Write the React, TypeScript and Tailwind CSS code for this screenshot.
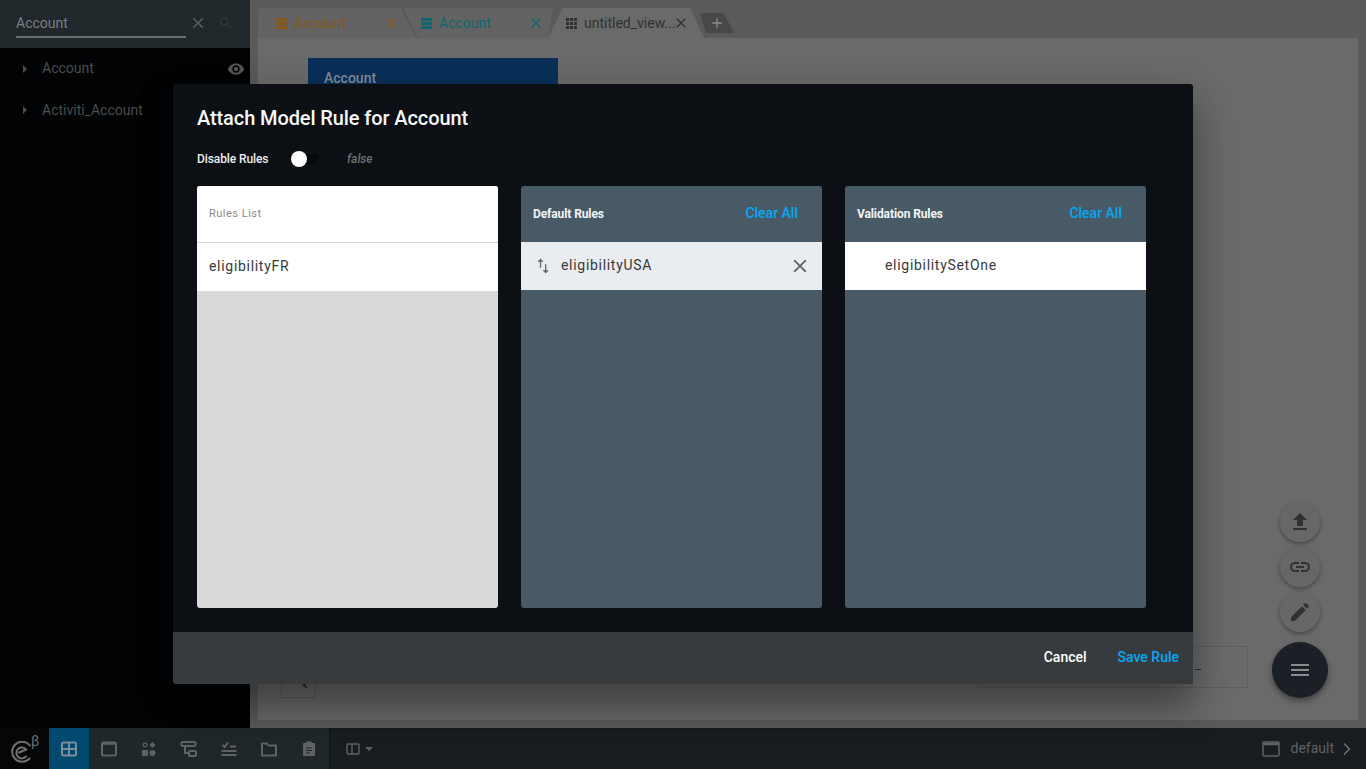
import React from "react";

const P = {
  upload: "M9 16h6v-6h4l-7-7-7 7h4zm-4 2h14v2H5z",
  link: "M3.9 12c0-1.71 1.39-3.1 3.1-3.1h4V7H7c-2.76 0-5 2.24-5 5s2.24 5 5 5h4v-1.9H7c-1.71 0-3.1-1.39-3.1-3.1zM8 13h8v-2H8v2zm9-6h-4v1.9h4c1.71 0 3.1 1.39 3.1 3.1s-1.39 3.1-3.1 3.1h-4V17h4c2.76 0 5-2.24 5-5s-2.24-5-5-5z",
  edit: "M3 17.25V21h3.75L17.81 9.94l-3.75-3.75L3 17.25zM20.71 7.04c.39-.39.39-1.02 0-1.41l-2.34-2.34c-.39-.39-1.02-.39-1.41 0l-1.83 1.83 3.75 3.75 1.83-1.83z",
  menu: "M3 18h18v-2H3v2zm0-5h18v-2H3v2zm0-7v2h18V6H3z",
  eye: "M12 4.5C7 4.5 2.73 7.61 1 12c1.73 4.39 6 7.5 11 7.5s9.27-3.11 11-7.5c-1.73-4.39-6-7.5-11-7.5zM12 17c-2.76 0-5-2.24-5-5s2.24-5 5-5 5 2.24 5 5-2.24 5-5 5zm0-8c-1.66 0-3 1.34-3 3s1.34 3 3 3 3-1.34 3-3-1.34-3-3-3z",
  search: "M15.5 14h-.79l-.28-.27C15.41 12.59 16 11.11 16 9.5 16 5.91 13.09 3 9.5 3S3 5.91 3 9.5 5.91 16 9.5 16c1.61 0 3.09-.59 4.23-1.57l.27.28v.79l5 4.99L20.49 19l-4.99-5zm-6 0C7.01 14 5 11.99 5 9.5S7.01 5 9.5 5 14 7.01 14 9.5 11.99 14 9.5 14z",
  close: "M19 6.41L17.59 5 12 10.59 6.41 5 5 6.41 10.59 12 5 17.59 6.41 19 12 13.41 17.59 19 19 17.59 13.41 12z",
  swap: "M16 17.01V10h-1.6v7.01h-3L15.2 21l3.8-3.99h-3zM9 3L5.2 6.99h3V14h1.6V6.99h3L9 3z",
  grid: "M3 3h5v5H3zM9.5 3h5v5h-5zM16 3h5v5h-5zM3 9.5h5v5H3zM9.5 9.5h5v5h-5zM16 9.5h5v5h-5zM3 16h5v5H3zM9.5 16h5v5h-5zM16 16h5v5h-5z",
  stack: "M3 3h18v5H3zM3 9.5h18v5H3zM3 16h18v5H3z",
  plus: "M19 13h-6v6h-2v-6H5v-2h6V5h2v6h6v2z",
  chevron: "M8.6 5.4L10 4l8 8-8 8-1.4-1.4L15.2 12z",
};

function Icon({ d, className }: { d: string; className: string }) {
  return (
    <svg viewBox="0 0 24 24" fill="currentColor" className={className}>
      <path d={d} />
    </svg>
  );
}

function TabBody({ icon, label }: { icon: string; label: string }) {
  return (
    <>
      <svg viewBox="3 3 18 18" fill="currentColor" className="mr-[7px] h-[11px] w-[11px] shrink-0">
        <path d={icon} />
      </svg>
      <span className="w-[89px] whitespace-nowrap text-[14px] leading-[16px]">{label}</span>
      <Icon d={P.close} className="h-[16px] w-[16px] shrink-0" />
    </>
  );
}

function BarIcon({ children, active }: { children: React.ReactNode; active?: boolean }) {
  return (
    <div className={`flex h-full w-[40px] items-center justify-center ${active ? "bg-[#01496e] text-[#7b8f9b]" : "text-[#5f6366]"}`}>
      <svg viewBox="0 0 18 18" fill="none" stroke="currentColor" strokeWidth="2" className="h-[18px] w-[18px]">
        {children}
      </svg>
    </div>
  );
}

function Fab({ d }: { d: string }) {
  return (
    <div className="flex h-[40px] w-[40px] items-center justify-center rounded-full bg-[#676767] text-[#2f3133] shadow-[0_2px_4px_rgba(0,0,0,0.35)]">
      <Icon d={d} className="h-[24px] w-[24px]" />
    </div>
  );
}

function DarkList({ title, children }: { title: string; children: React.ReactNode }) {
  return (
    <div className="flex h-[422px] w-[301px] flex-col rounded-[3px] bg-[#485a65]">
      <div className="flex h-[56px] items-center justify-between pl-[12px] pr-[24px]">
        <span className="text-[12px] font-bold tracking-[-0.1px] text-[#f2f4f5]">{title}</span>
        <span className="pb-[2px] text-[14px] font-medium text-[#03a9f4]">Clear All</span>
      </div>
      {children}
    </div>
  );
}

export default function App() {
  return (
    <div className="relative flex h-[769px] w-[1366px] flex-col overflow-hidden bg-[#5a5a5a] font-['Roboto',sans-serif]">
      <div className="flex min-h-0 flex-1">
        {/* left tree */}
        <aside className="flex w-[250px] flex-col bg-[#020304]">
          <div className="flex h-[48px] items-start bg-[#20282c] pl-[16px] pt-[8px]">
            <div className="h-[30px] w-[170px] border-b-2 border-[#6b6e70] pt-[7px] text-[14px] leading-[17px] text-[#7c7f81]">
              Account
            </div>
            <Icon d={P.close} className="ml-[3px] mt-[6px] h-[18px] w-[18px] text-[#5b6063]" />
            <Icon d={P.search} className="ml-[11px] mt-[7px] h-[16px] w-[16px] text-[#33393d]" />
          </div>
          <div className="flex h-[41px] items-center pl-[23px] pr-[5px] text-[14px] text-[#4b4c4d]">
            <span className="h-0 w-0 border-y-[4px] border-l-[4px] border-y-transparent border-l-[#4b4c4d]" />
            <span className="ml-[15px] flex-1">Account</span>
            <Icon d={P.eye} className="h-[18px] w-[18px] text-[#555657]" />
          </div>
          <div className="flex h-[42px] items-center pl-[23px] text-[14px] text-[#4b4c4d]">
            <span className="h-0 w-0 border-y-[4px] border-l-[4px] border-y-transparent border-l-[#4b4c4d]" />
            <span className="ml-[15px]">Activiti_Account</span>
          </div>
        </aside>

        {/* view editor behind the dialog */}
        <main className="flex flex-1 flex-col px-[8px] pb-[8px] pt-[8px]">
          <div className="flex h-[30px] items-start">
            <div className="flex h-[30px] w-[160px] items-center rounded-tl-[3px] bg-[#636363] pl-[18px] text-[#85581a] [clip-path:polygon(0_0,142px_0,158px_100%,0_100%)]">
              <TabBody icon={P.grid} label="Account" />
            </div>
            <div className="ml-[-15px] flex h-[30px] w-[150px] items-center bg-[#636363] pl-[18px] text-[#0f666c] [clip-path:polygon(0_0,150px_0,145px_100%,15px_100%)]">
              <TabBody icon={P.stack} label="Account" />
            </div>
            <div className="ml-[-5px] flex h-[30px] w-[156px] items-center bg-[#6a6a6a] pl-[18px] text-[#2f3133] [clip-path:polygon(15px_0,142px_0,156px_100%,0_100%)]">
              <TabBody icon={P.grid} label="untitled_view..." />
            </div>
            <div className="ml-[-4px] mt-[5px] flex h-[20px] w-[34px] items-center justify-center bg-[#484848] text-[#8c8c8c] [clip-path:polygon(0_0,70%_0,100%_100%,18%_100%)]">
              <Icon d={P.plus} className="h-[16px] w-[16px]" />
            </div>
          </div>
          <div className="flex-1 bg-[#6a6a6a] pl-[50px] pt-[20px]">
            <div className="h-[60px] w-[250px] bg-[#0a3059] pl-[16px] pt-[11px] text-[14px] font-medium leading-[18px] text-[#7f8c99]">
              Account
            </div>
          </div>
        </main>
      </div>

      {/* bottom bar */}
      <footer className="flex h-[41px] items-stretch bg-[#171d21]">
        <div className="relative w-[49px] bg-[#050607] text-[#6f7172]">
          <svg viewBox="0 0 24 22" fill="none" stroke="currentColor" strokeWidth="2" strokeLinecap="round" className="absolute left-[9px] top-[13px] h-[22px] w-[24px]">
            <path d="M20.5 17.5A10 10 0 1 1 21 4.5" />
            <path d="M17 15.5A5.5 5.5 0 1 1 17.2 8.5L10 11.5" />
          </svg>
          <span className="absolute left-[31px] top-[5px] text-[14px] leading-[16px]">β</span>
        </div>
        <div className="flex w-[281px] border-r border-[#121619] bg-[#1f272b]">
          <BarIcon active>
            <rect x="2" y="2.5" width="14" height="13" rx="1.5" />
            <path d="M2 9h14M9 2.5v13" />
          </BarIcon>
          <BarIcon>
            <rect x="2" y="2.5" width="14" height="13" rx="1.5" />
            <path d="M2 3.5h14" strokeWidth="2.5" />
          </BarIcon>
          <BarIcon>
            <circle cx="5" cy="5" r="1.9" strokeWidth="1.2" />
            <path d="M12.5 2l3 3-3 3-3-3z" fill="currentColor" stroke="none" />
            <rect x="2" y="10" width="6" height="6" fill="currentColor" stroke="none" />
            <circle cx="12.5" cy="13" r="3" fill="currentColor" stroke="none" />
          </BarIcon>
          <BarIcon>
            <rect x="1.5" y="2" width="14" height="4" rx="1" />
            <path d="M5 6v7h4" />
            <rect x="9" y="11" width="7" height="5" rx="1" />
          </BarIcon>
          <BarIcon>
            <path d="M2.5 5l2 2 3.5-4.5M10 6.5h6M1.5 11h15M1.5 15h15" />
          </BarIcon>
          <BarIcon>
            <path d="M2 3.5h5l1.5 2H16v10H2z" strokeLinejoin="round" />
          </BarIcon>
          <BarIcon>
            <path d="M3.5 3.5h11v12h-11z" fill="currentColor" strokeWidth="1" />
            <path d="M6.5 2h5v2.5h-5z" fill="currentColor" strokeWidth="1" />
            <path d="M6 8h6M6 10.5h6M6 13h4" stroke="#1f272b" strokeWidth="1.2" />
          </BarIcon>
        </div>
        <div className="flex w-[50px] items-center pl-[16px] text-[#5f6366]">
          <svg viewBox="0 0 14 12" fill="none" stroke="currentColor" strokeWidth="1.4" className="h-[12px] w-[14px]">
            <rect x="1" y="1" width="12" height="10" rx="1" />
            <path d="M6 1v10" />
          </svg>
          <span className="ml-[5px] h-0 w-0 border-x-[4px] border-t-[4px] border-x-transparent border-t-[#5f6366]" />
        </div>
        <div className="flex flex-1 items-center justify-end pr-[11px] text-[14px] text-[#5f6366]">
          <svg viewBox="0 0 18 16" fill="none" stroke="currentColor" className="h-[16px] w-[18px]">
            <rect x="1" y="1" width="16" height="14" rx="1" strokeWidth="1.5" />
            <path d="M1 3h16" strokeWidth="2.5" />
          </svg>
          <span className="ml-[10px]">default</span>
          <Icon d={P.chevron} className="ml-[3px] h-[18px] w-[18px] text-[#6f7172]" />
        </div>
      </footer>

      {/* floating widgets of the page behind */}
      <div className="absolute left-[976px] top-[646px] h-[42px] w-[272px] border border-[#5e5e5e]">
        <div className="absolute left-[218px] top-[22px] h-px w-[6px] bg-[#0a3059]" />
      </div>
      <div className="absolute left-[281px] top-[670px] flex h-[28px] w-[35px] items-end justify-center border border-[#585858] text-[#2f3133]">
        <Icon d={P.search} className="mb-[5px] h-[24px] w-[24px]" />
      </div>
      <div className="absolute left-[1272px] top-[502px] flex w-[56px] flex-col items-center gap-[5px]">
        <Fab d={P.upload} />
        <Fab d={P.link} />
        <Fab d={P.edit} />
        <div className="mt-[5px] flex h-[56px] w-[56px] items-center justify-center rounded-full bg-[#1a2025] text-[#8a8d8f] shadow-[0_3px_6px_rgba(0,0,0,0.4)]">
          <Icon d={P.menu} className="h-[24px] w-[24px]" />
        </div>
      </div>

      {/* dialog */}
      <div className="absolute left-[173px] top-[84px] flex h-[600px] w-[1020px] flex-col overflow-hidden rounded-[3px] bg-[#0c1014] shadow-[0_24px_38px_rgba(0,0,0,0.35),0_9px_46px_rgba(0,0,0,0.1)]">
        <div className="flex-1 px-[24px]">
          <h2 className="pt-[22px] text-[20px] font-medium leading-[24px] tracking-[-0.1px] text-[#f7f8f8]">Attach Model Rule for Account</h2>
          <div className="mt-[21px] flex h-[16px] items-center">
            <span className="w-[94px] text-[12px] font-medium tracking-[-0.1px] text-[#eceded]">Disable Rules</span>
            <div className="relative h-[10px] w-[27px] rounded-full bg-[#050709]">
              <div className="absolute left-0 top-[-3px] h-[16px] w-[16px] rounded-full bg-white" />
            </div>
            <span className="ml-[29px] text-[12px] font-medium italic text-[#6f7173]">false</span>
          </div>
          <div className="mt-[19px] flex gap-[23px]">
            <div className="flex h-[422px] w-[301px] flex-col overflow-hidden rounded-[3px] bg-[#d9d9d9]">
              <div className="flex h-[57px] items-center border-b border-[#d6d6d6] bg-white pl-[12px] text-[11px] tracking-[0.5px] text-[#8a8a8a]">
                Rules List
              </div>
              <div className="flex h-[48px] items-center bg-white pb-[2px] pl-[12px] text-[14px] tracking-[0.7px] text-[#3a3a3a]">
                eligibilityFR
              </div>
            </div>
            <DarkList title="Default Rules">
              <div className="flex h-[48px] items-center bg-[#e9edf0] pl-[12px] pr-[11px] text-[14px] tracking-[0.7px] text-[#3a3a3a]">
                <Icon d={P.swap} className="h-[20px] w-[20px] text-[#666]" />
                <span className="ml-[8px] flex-1 pb-[2px]">eligibilityUSA</span>
                <Icon d={P.close} className="h-[22px] w-[22px] text-[#666]" />
              </div>
            </DarkList>
            <DarkList title="Validation Rules">
              <div className="flex h-[48px] items-center bg-white pb-[2px] pl-[40px] text-[14px] tracking-[0.7px] text-[#3a3a3a]">
                eligibilitySetOne
              </div>
            </DarkList>
          </div>
        </div>
        <div className="flex h-[52px] items-center justify-end bg-[#383b3e] pb-[2px] pr-[14px] text-[14px] font-medium">
          <span className="text-white">Cancel</span>
          <span className="ml-[31px] text-[#03a9f4]">Save Rule</span>
        </div>
      </div>
    </div>
  );
}
